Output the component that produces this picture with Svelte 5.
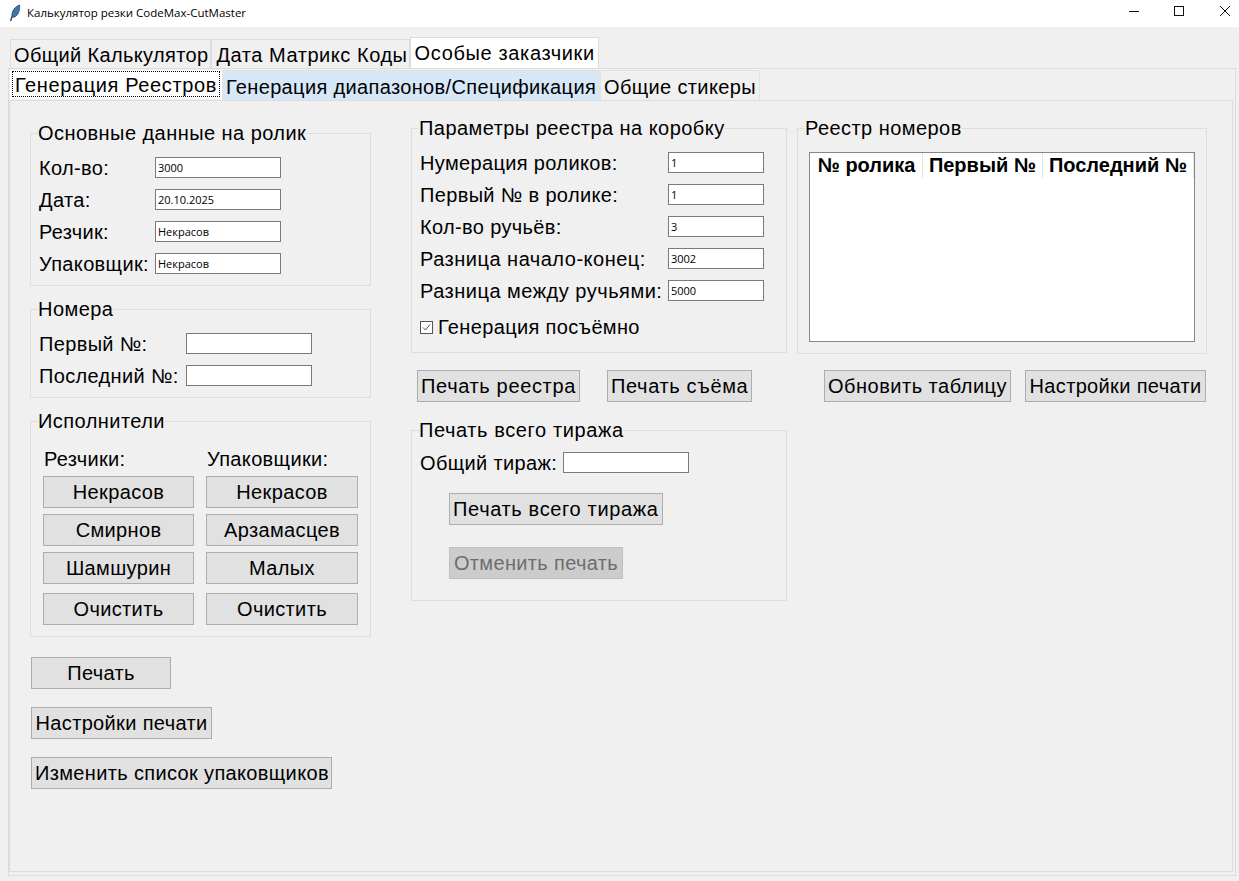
<script lang="ts">
  const mainFields = [
    { label: "Кол-во:", value: "3000" },
    { label: "Дата:", value: "20.10.2025" },
    { label: "Резчик:", value: "Некрасов" },
    { label: "Упаковщик:", value: "Некрасов" },
  ];
  const paramFields = [
    { label: "Нумерация роликов:", value: "1", spread: false },
    { label: "Первый № в ролике:", value: "1", spread: false },
    { label: "Кол-во ручьёв:", value: "3", spread: false },
    { label: "Разница начало-конец:", value: "3002", spread: true },
    { label: "Разница между ручьями:", value: "5000", spread: true },
  ];
  const cutters = ["Некрасов", "Смирнов", "Шамшурин"];
  const packers = ["Некрасов", "Арзамасцев", "Малых"];
</script>

<div class="window">
  <header class="titlebar">
    <svg class="feather" width="12" height="18" viewBox="0 0 12 18">
      <path d="M1.5 17 C2 14 2.5 13 3 11 C3 7 6 2.5 10.5 1 C11 5 10 10 6.5 12.5 C5 13.5 4 13 3 13.5 C2.6 15 2.2 16 1.9 17 Z" fill="#3f78ad" stroke="#1c2c3c" stroke-width="0.7" />
    </svg>
    <span class="title">Калькулятор резки CodeMax-CutMaster</span>
    <div class="controls">
      <svg width="46" height="27" viewBox="0 0 46 27"><path d="M28 11.5H38" stroke="#111" fill="none" /></svg>
      <svg width="46" height="27" viewBox="0 0 46 27"><rect x="27.5" y="6.5" width="9" height="9" stroke="#111" fill="none" /></svg>
      <svg width="46" height="27" viewBox="0 0 46 27"><path d="M27 6L37 16M37 6L27 16" stroke="#111" fill="none" /></svg>
    </div>
  </header>

  <div class="outer">
    <div class="tabs outer-tabs">
      <div class="tab">Общий Калькулятор</div>
      <div class="tab second">Дата Матрикс Коды</div>
      <div class="tab current">Особые заказчики</div>
    </div>

    <div class="outer-pane">
      <div class="tabs inner-tabs">
        <div class="tab current"><span class="focus">Генерация Реестров</span></div>
        <div class="tab hover">Генерация диапазонов/Спецификация</div>
        <div class="tab">Общие стикеры</div>
      </div>

      <div class="inner-pane">
        <div class="col left">
          <fieldset>
            <legend>Основные данные на ролик</legend>
            {#each mainFields as f}
              <div class="row"><span class="lbl main-lbl">{f.label}</span><input value={f.value} /></div>
            {/each}
          </fieldset>

          <fieldset>
            <legend>Номера</legend>
            <div class="row"><span class="lbl num-lbl">Первый №:</span><input /></div>
            <div class="row"><span class="lbl num-lbl">Последний №:</span><input /></div>
          </fieldset>

          <fieldset class="people">
            <legend>Исполнители</legend>
            <div class="people-grid">
              <div class="people-col">
                <span class="people-head">Резчики:</span>
                {#each cutters as name}<button>{name}</button>{/each}
                <button class="clear">Очистить</button>
              </div>
              <div class="people-col">
                <span class="people-head">Упаковщики:</span>
                {#each packers as name}<button>{name}</button>{/each}
                <button class="clear">Очистить</button>
              </div>
            </div>
          </fieldset>

          <div class="actions">
            <button class="print">Печать</button>
            <button class="settings">Настройки печати</button>
            <button class="packers">Изменить список упаковщиков</button>
          </div>
        </div>

        <div class="col mid">
          <fieldset class="params">
            <legend>Параметры реестра на коробку</legend>
            {#each paramFields as f}
              <div class="row"><span class="lbl param-lbl" class:spread={f.spread}>{f.label}</span><input class="short" value={f.value} /></div>
            {/each}
            <label class="check">
              <svg width="13" height="13" viewBox="0 0 13 13">
                <rect x="0.5" y="0.5" width="12" height="12" fill="#fff" stroke="#555" />
                <path d="M3 6.5L5.5 9L10 3.5" fill="none" stroke="#555" />
              </svg>
              Генерация посъёмно
            </label>
          </fieldset>

          <div class="btn-row mid-btns">
            <button class="wide">Печать реестра</button>
            <button class="wide">Печать съёма</button>
          </div>

          <fieldset class="total">
            <legend>Печать всего тиража</legend>
            <div class="row"><span class="lbl total-lbl">Общий тираж:</span><input /></div>
            <button class="total-btn wide">Печать всего тиража</button>
            <button class="total-btn off" disabled>Отменить печать</button>
          </fieldset>
        </div>

        <div class="col right">
          <fieldset>
            <legend>Реестр номеров</legend>
            <div class="tree">
              <div class="tree-head">
                <span>№ ролика</span>
                <span>Первый №</span>
                <span>Последний №</span>
              </div>
            </div>
          </fieldset>

          <div class="btn-row right-btns">
            <button class="refresh">Обновить таблицу</button>
            <button class="settings">Настройки печати</button>
          </div>
        </div>
      </div>
    </div>
  </div>
</div>

<style>
  :global(body) {
    background: #f0f0f0;
  }

  .window {
    width: 1239px;
    height: 881px;
    display: flex;
    flex-direction: column;
    overflow: hidden;
    background: #f0f0f0;
    color: #000;
    font-family: "Liberation Sans", Arial, sans-serif;
    font-size: 20px;
    letter-spacing: 0.35px;
  }

  .titlebar {
    height: 27px;
    flex-shrink: 0;
    display: flex;
    align-items: center;
    background: #fff;
    padding-left: 9px;
    box-sizing: border-box;
    letter-spacing: 0;
  }

  .feather {
    margin-right: 6px;
    margin-top: -2px;
  }

  .title {
    font-family: "Open Sans", "Noto Sans", sans-serif;
    font-size: 11.5px;
    margin-top: -3px;
  }

  .controls {
    margin-left: auto;
    display: flex;
  }

  .outer {
    flex: 1;
    display: flex;
    flex-direction: column;
    padding: 10px 3px 5px 8px;
    min-height: 0;
  }

  .tabs {
    display: flex;
    align-items: flex-end;
    flex-shrink: 0;
  }

  .tab {
    box-sizing: border-box;
    white-space: nowrap;
    line-height: 24px;
    border: solid #dcdcdc;
    border-width: 1px 1px 0 1px;
  }

  .outer-tabs {
    height: 31px;
    padding-left: 2px;
  }

  .outer-tabs .tab {
    height: 29px;
    padding: 3px 2px 0 3px;
  }

  .outer-tabs .tab.second {
    letter-spacing: 0.55px;
    padding-left: 4px;
    padding-right: 1px;
  }

  .outer-tabs .tab.current {
    height: 31px;
    background: #fff;
    padding: 3px 3px 0 4px;
    letter-spacing: 0.65px;
  }

  .outer-pane {
    flex: 1;
    display: flex;
    flex-direction: column;
    border: 1px solid #dcdcdc;
    min-height: 0;
  }

  .inner-tabs {
    height: 31px;
  }

  .inner-tabs .tab {
    height: 30px;
    padding: 4px 3px 0 3px;
    border-color: #e2e2e2;
  }

  .inner-tabs .tab.current {
    height: 29px;
    background: #fff;
    padding: 1px 2px;
    margin-left: 1px;
    margin-bottom: 1px;
    border: 0;
    letter-spacing: 0.62px;
  }

  .focus {
    display: block;
    padding: 2px 3px 0;
    outline: 1px dotted #000;
    outline-offset: -1px;
    line-height: 24px;
  }

  .inner-tabs .tab.hover {
    background: #d6e7f8;
  }

  .inner-pane {
    flex: 1;
    display: flex;
    margin: 0 2px 3px 0;
    padding: 15px 0 0 20px;
    border: 1px solid #dcdcdc;
    min-height: 0;
  }

  .col {
    display: flex;
    flex-direction: column;
  }

  .left {
    width: 341px;
    margin-right: 40px;
    padding-top: 5px;
    gap: 11px;
  }

  .mid {
    width: 376px;
    margin-right: 10px;
  }

  .right {
    width: 410px;
  }

  fieldset {
    box-sizing: border-box;
    min-width: 0;
    margin: 0;
    padding: 12px 8px 11px;
    border: 1px solid #dedede;
    display: flex;
    flex-direction: column;
    gap: 11px;
  }

  legend {
    padding: 0;
    margin-left: -1px;
    line-height: 24px;
    white-space: nowrap;
    letter-spacing: 0.45px;
  }

  .row {
    display: flex;
    align-items: center;
    height: 21px;
  }

  .lbl {
    flex-shrink: 0;
    white-space: nowrap;
    padding-top: 2px;
  }

  .main-lbl {
    width: 116px;
  }

  .num-lbl {
    width: 147px;
  }

  .param-lbl {
    width: 248px;
  }

  .param-lbl.spread {
    letter-spacing: 0.5px;
  }

  .total-lbl {
    width: 143px;
  }

  input {
    box-sizing: border-box;
    width: 126px;
    height: 21px;
    margin: 0;
    padding: 0 2px;
    border: 1px solid #7a7a7a;
    border-radius: 0;
    outline: none;
    background: #fff;
    color: #000;
    font-family: "Open Sans", "Noto Sans", sans-serif;
    font-size: 11px;
    letter-spacing: 0;
  }

  input.short {
    width: 96px;
  }

  .params {
    padding-bottom: 14px;
  }

  .check {
    display: flex;
    align-items: center;
    gap: 5px;
    height: 22px;
    margin-top: 4px;
  }

  button {
    box-sizing: border-box;
    height: 32px;
    margin: 0;
    padding: 0 3px;
    border: 1px solid #adadad;
    border-radius: 0;
    background: #e1e1e1;
    color: #000;
    font: inherit;
    letter-spacing: inherit;
    white-space: nowrap;
  }

  .people-grid {
    display: grid;
    grid-template-columns: 151px 152px;
    gap: 12px;
    margin: 2px 0 0 4px;
  }

  .people-col {
    display: flex;
    flex-direction: column;
    gap: 6px;
  }

  .people-head {
    line-height: 24px;
    margin: 0 0 -1px 1px;
  }

  .clear {
    margin-top: 3px;
  }

  .actions {
    display: flex;
    flex-direction: column;
    align-items: flex-start;
    gap: 18px;
    margin: 9px 0 0 1px;
  }

  .print {
    width: 140px;
  }

  .settings {
    width: 181px;
  }

  .packers {
    width: 301px;
  }

  .wide {
    letter-spacing: 0.65px;
  }

  .btn-row {
    display: flex;
    margin-top: 17px;
  }

  .mid-btns {
    gap: 27px;
    padding-left: 6px;
    margin-bottom: 16px;
  }

  .right-btns {
    gap: 14px;
    padding-left: 27px;
    margin-top: 16px;
  }

  .refresh {
    width: 187px;
    letter-spacing: 0.5px;
  }

  .total {
    gap: 0;
    padding-top: 10px;
    padding-bottom: 21px;
  }

  .total legend {
    letter-spacing: 0.6px;
  }

  .total-btn {
    align-self: flex-start;
    margin: 20px 0 0 29px;
  }

  .total-btn.off {
    margin-top: 22px;
    background: #cccccc;
    border-color: #bfbfbf;
    color: #6d6d6d;
    width: 174px;
  }

  .tree {
    box-sizing: border-box;
    width: 386px;
    height: 190px;
    margin: 0 0 0 3px;
    border: 1px solid #828790;
    background: #fff;
  }

  .tree-head {
    display: grid;
    grid-template-columns: 112px 120px 151px;
    height: 24px;
    padding-left: 1px;
    font-weight: 700;
    line-height: 25px;
    text-align: center;
    letter-spacing: 0;
  }

  .tree-head span {
    border-right: 1px solid #e5e5e5;
    white-space: nowrap;
  }
</style>
